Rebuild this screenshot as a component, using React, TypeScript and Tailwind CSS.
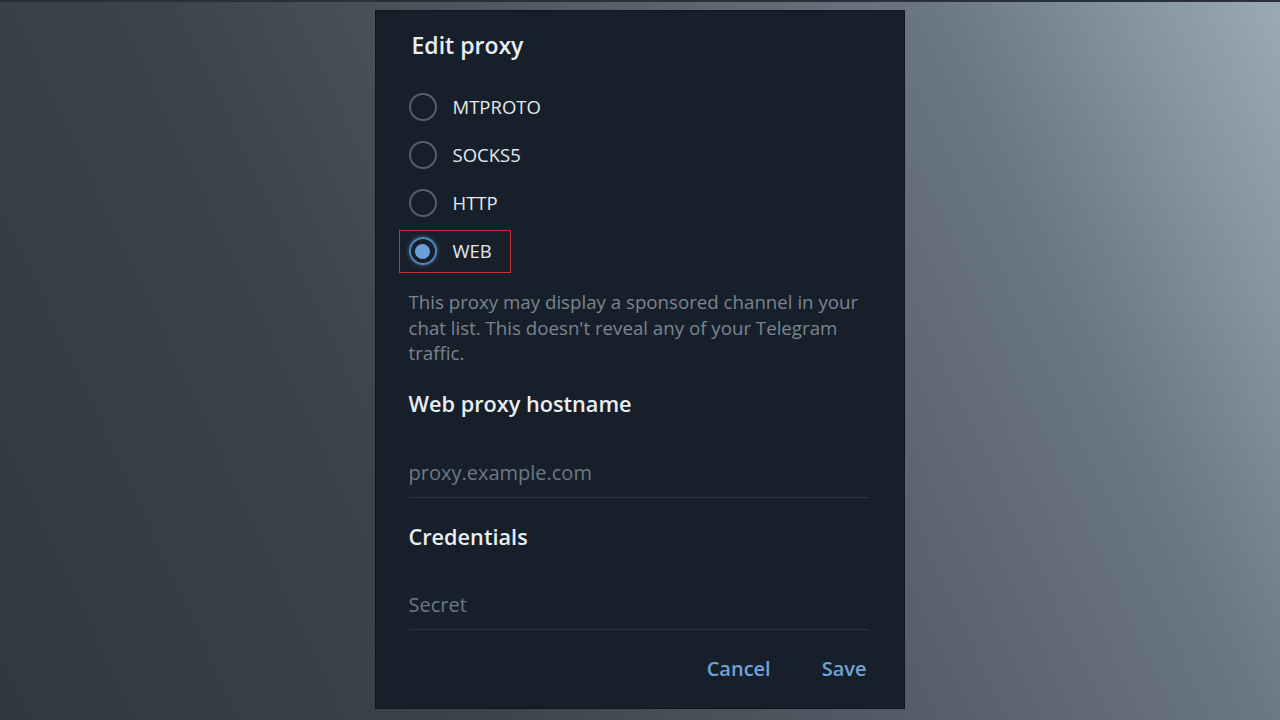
import React from "react";

const options = ["MTPROTO", "SOCKS5", "HTTP", "WEB"];

function Radio({ checked }: { checked: boolean }) {
  if (checked) {
    return (
      <span className="flex size-[28px] shrink-0 items-center justify-center rounded-full border-2 border-[#4f86bd] shadow-[0_0_4px_rgba(110,163,221,0.5)]">
        <span className="size-[15px] rounded-full bg-[#6a9fd8]" />
      </span>
    );
  }
  return <span className="block size-[28px] shrink-0 rounded-full border-2 border-[#56606b]" />;
}

function Field({ label, placeholder, gap }: { label: string; placeholder: string; gap: string }) {
  return (
    <div>
      <div className="text-[21.7px] font-semibold leading-[30px] text-[#e9eef3]">{label}</div>
      <div className={`${gap} border-b border-[#2a3440] pb-[10px] text-[20px] leading-[28px] text-[#6c7884]`}>
        {placeholder}
      </div>
    </div>
  );
}

export default function App() {
  return (
    <div className="h-[720px] w-[1280px] overflow-hidden bg-[linear-gradient(65deg,#32383f_0%,#3c434b_30%,#525c66_55%,#6a7681_78%,#9aabb6_100%)] font-['Open_Sans',sans-serif]">
      <div className="h-[2px] bg-[#2a3038]" />
      <div className="flex justify-center pt-[8px]">
        <div className="ml-[-1px] flex h-[699px] w-[530px] flex-col border border-[#10161d] bg-[#17202a] px-[33px] pt-[18px]">
          <div className="pl-[3px] text-[23px] font-semibold leading-[32px] text-[#e9eef3]">Edit proxy</div>

          <div className="mt-[22px] flex flex-col">
            {options.map((o) => (
              <div key={o} className="flex h-[48px] items-center">
                <div
                  className={
                    o === "WEB"
                      ? "ml-[-10px] flex h-[43px] items-center gap-[16px] border border-[#c2333f] pl-[9px] pr-[18px]"
                      : "flex h-[28px] items-center gap-[16px]"
                  }
                >
                  <Radio checked={o === "WEB"} />
                  <span className="text-[18.5px] leading-[24px] text-[#e4e9ee]">{o}</span>
                </div>
              </div>
            ))}
          </div>

          <p className="mt-[14px] text-[18.7px] leading-[25.5px] text-[#7a8591]">
            This proxy may display a sponsored channel in your chat list. This doesn't reveal any of your Telegram
            traffic.
          </p>

          <div className="mt-[23px] flex flex-col gap-[24px] pr-[2px]">
            <Field label="Web proxy hostname" placeholder="proxy.example.com" gap="mt-[40px]" />
            <Field label="Credentials" placeholder="Secret" gap="mt-[39px]" />
          </div>

          <div className="mt-[25px] flex justify-end gap-[51px] pr-[4px] text-[20px] font-semibold leading-[28px] text-[#6ea4d8]">
            <span>Cancel</span>
            <span>Save</span>
          </div>
        </div>
      </div>
    </div>
  );
}
